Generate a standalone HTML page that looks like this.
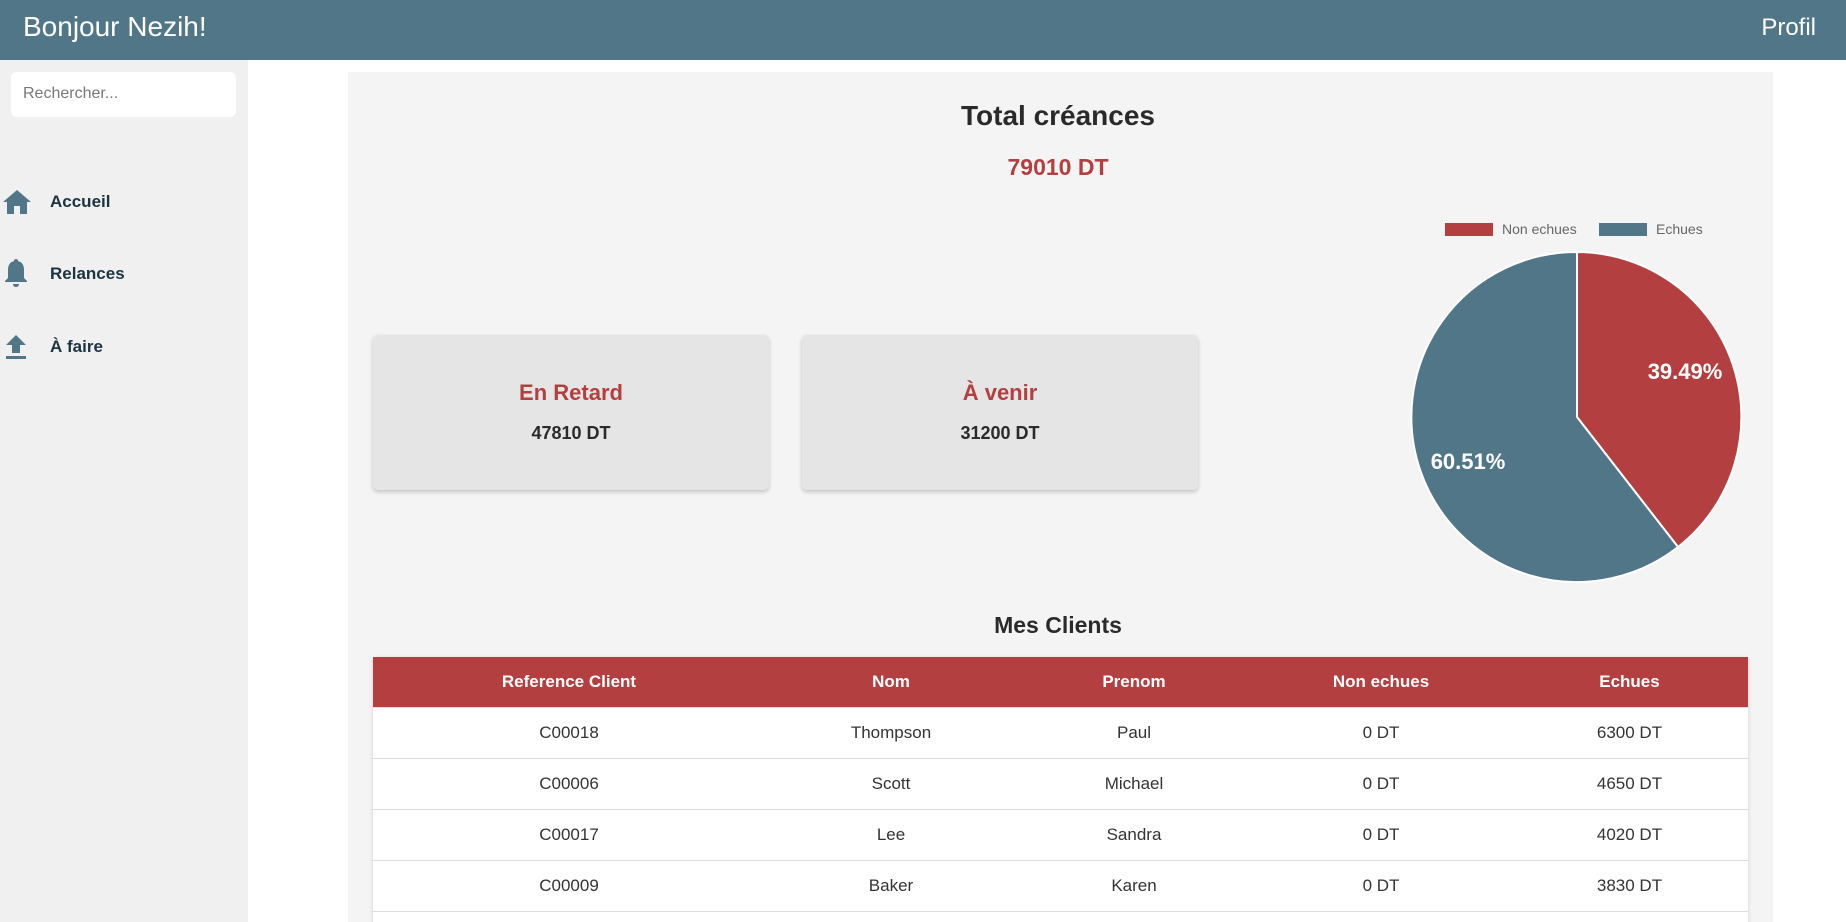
<!DOCTYPE html>
<html><head><meta charset="utf-8"><style>
*{box-sizing:border-box;margin:0;padding:0}
html,body{width:1846px;height:922px;overflow:hidden}
body{background:#fff;font-family:"Liberation Sans",Arial,sans-serif;position:relative}
.hdr{position:absolute;left:0;top:0;width:1846px;height:60px;background:#517687;color:#fff}
.hdr .l{position:absolute;left:23px;top:11px;font-size:28px}
.hdr .r{position:absolute;right:30px;top:14px;font-size:24px}
.side{position:absolute;left:0;top:60px;width:248px;height:862px;background:#f0f0f0}
.search{position:absolute;left:11px;top:12px;width:225px;height:45px;background:#fff;border-radius:6px;color:#777;font-size:16px;padding:13px 12px}
.mi{position:absolute;left:0;font-weight:bold;font-size:17px;color:#1c3340}
.mi svg{position:absolute;left:2px}
.mi span{position:absolute;left:50px;white-space:nowrap}
.panel{position:absolute;left:348px;top:72px;width:1425px;height:850px;background:#f4f4f4;overflow:hidden}
.t1{position:absolute;left:0;width:900px;text-align:center;font-weight:bold}
.card{position:absolute;top:263px;width:396px;height:155px;background:#e5e5e5;border-radius:5px;box-shadow:0 2px 4px rgba(0,0,0,.2);text-align:center}
.card .a{position:absolute;top:45px;width:100%;color:#b33f40;font-weight:bold;font-size:22px}
.card .b{position:absolute;top:88px;width:100%;color:#2a2a2a;font-weight:bold;font-size:18px}
table{position:absolute;left:25px;top:585px;width:1375px;border-collapse:collapse;background:#fff;box-shadow:0 1px 4px rgba(0,0,0,.15);table-layout:fixed}
th{background:#b33f40;color:#fff;height:50px;font-size:17px;font-weight:bold}
td{height:51px;text-align:center;font-size:17px;color:#333;border-top:1px solid #ddd}
</style></head><body>
<div class="hdr"><div class="l">Bonjour Nezih!</div><div class="r">Profil</div></div>
<div class="side">
<div class="search">Rechercher...</div>
<div class="mi" style="top:129px"><svg width="30" height="26" viewBox="0 0 30 26" style="top:0"><path d="M15 1L1 13h4v12h7v-8h6v8h7V13h4z" fill="#517687"/></svg><span style="top:3px">Accueil</span></div>
<div class="mi" style="top:198px"><svg width="28" height="30" viewBox="0 0 28 30" style="top:0"><path d="M14 1c-1.5 0-2 1-2 2-4 1-6 4-6 9v8l-3 3v1h22v-1l-3-3v-8c0-5-2-8-6-9 0-1-.5-2-2-2zM11 26c0 2 1.5 3 3 3s3-1 3-3z" fill="#517687"/></svg><span style="top:6px">Relances</span></div>
<div class="mi" style="top:273px"><svg width="28" height="30" viewBox="0 0 28 30" style="top:0"><path d="M14 2L4 12h6v8h8v-8h6zM4 23h20v3H4z" fill="#517687"/></svg><span style="top:4px">À faire</span></div>
</div>
<div class="panel">
<div class="t1" style="top:28px;left:260px;width:900px;font-size:28px;color:#2a2a2a">Total créances</div>
<div class="t1" style="top:82px;left:260px;width:900px;font-size:23px;color:#b33f40">79010 DT</div>
<div class="card" style="left:25px"><div class="a">En Retard</div><div class="b">47810 DT</div></div>
<div class="card" style="left:454px"><div class="a">À venir</div><div class="b">31200 DT</div></div>
<div class="t1" style="top:540px;left:260px;width:900px;font-size:23px;color:#2a2a2a">Mes Clients</div>
<table>
<colgroup><col style="width:392px"><col style="width:252px"><col style="width:234px"><col style="width:260px"><col style="width:237px"></colgroup>
<tr><th>Reference Client</th><th>Nom</th><th>Prenom</th><th>Non echues</th><th>Echues</th></tr>
<tr><td>C00018</td><td>Thompson</td><td>Paul</td><td>0 DT</td><td>6300 DT</td></tr>
<tr><td>C00006</td><td>Scott</td><td>Michael</td><td>0 DT</td><td>4650 DT</td></tr>
<tr><td>C00017</td><td>Lee</td><td>Sandra</td><td>0 DT</td><td>4020 DT</td></tr>
<tr><td>C00009</td><td>Baker</td><td>Karen</td><td>0 DT</td><td>3830 DT</td></tr>
<tr><td>&nbsp;</td><td></td><td></td><td></td><td></td></tr>
</table>
</div>
<svg style="position:absolute;left:0;top:0" width="1846" height="922">
<rect x="1445" y="223" width="48" height="13" fill="#b33f40"/>
<text x="1502" y="234" font-family="Liberation Sans" font-size="14" fill="#666">Non echues</text>
<rect x="1599" y="223" width="48" height="13" fill="#517687"/>
<text x="1656" y="234" font-family="Liberation Sans" font-size="14" fill="#666">Echues</text>
<path d="M1577 417L1577 252A165 165 0 0 1 1678 547Z" fill="#b33f40" stroke="#fff" stroke-width="2"/>
<path d="M1577 417L1678 547A165 165 0 1 1 1577 252Z" fill="#517687" stroke="#fff" stroke-width="2"/>
<text x="1685" y="379" text-anchor="middle" font-family="Liberation Sans" font-weight="bold" font-size="22" fill="#fff">39.49%</text>
<text x="1468" y="469" text-anchor="middle" font-family="Liberation Sans" font-weight="bold" font-size="22" fill="#fff">60.51%</text>
</svg>
</body></html>
